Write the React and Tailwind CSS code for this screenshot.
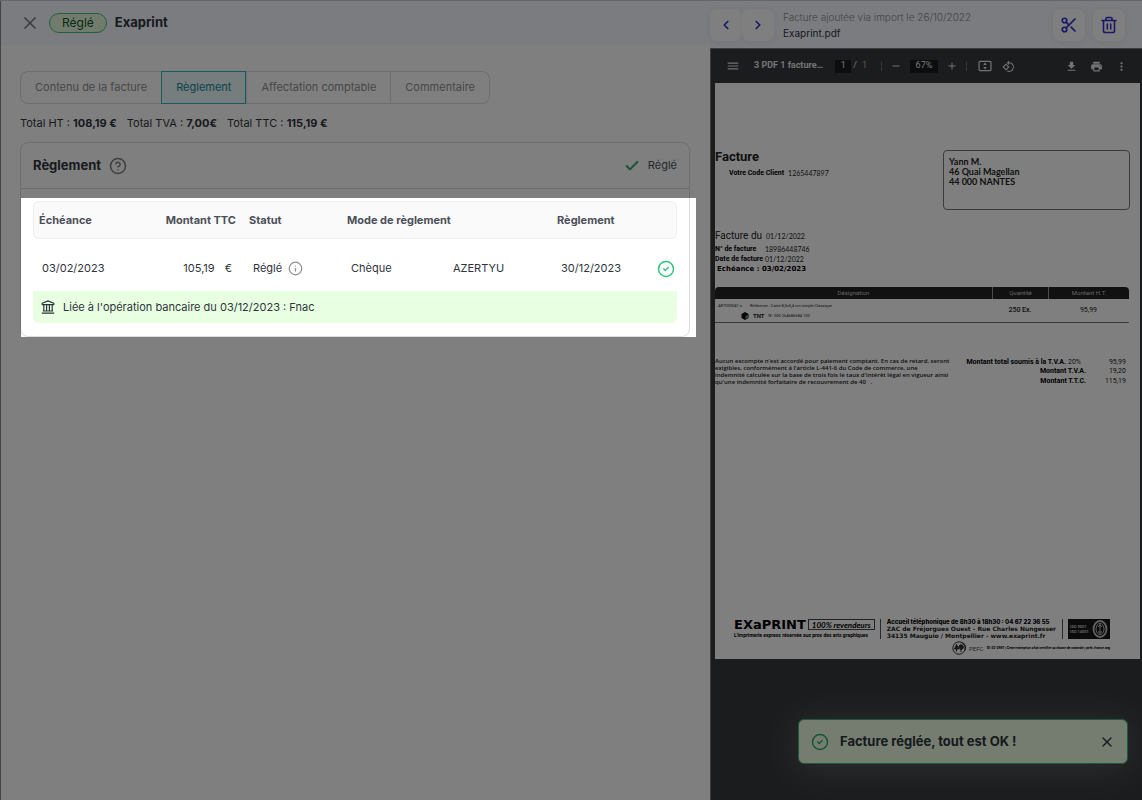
import { Check, ChevronLeft, ChevronRight, CircleCheck, CircleHelp, Info, Scissors, X } from 'lucide-react'
import { MdAdd, MdFileDownload, MdMenu, MdMoreVert, MdPrint, MdRemove, MdRotate90DegreesCcw } from 'react-icons/md'

const TABS = ['Contenu de la facture', 'Règlement', 'Affectation comptable', 'Commentaire']

const TOTALS = [
  { label: 'Total HT', value: '108,19 €' },
  { label: 'Total TVA', value: '7,00€' },
  { label: 'Total TTC', value: '115,19 €' },
]

function TrashIcon() {
  return (
    <svg viewBox="0 0 18 18" className="size-[18px]" fill="none" stroke="currentColor" strokeWidth="1.6" strokeLinecap="round" strokeLinejoin="round">
      <path d="M2 4.5h14M6 4.5V2.6Q6 1.5 7 1.5h4q1 0 1 1.1v1.9M3.5 4.5v10.2q0 1.8 1.8 1.8h7.4q1.8 0 1.8-1.8V4.5M7.3 8v5M10.7 8v5" />
    </svg>
  )
}

function BankIcon() {
  return (
    <svg viewBox="0 0 14 14" className="size-[14px] shrink-0" fill="none" stroke="currentColor" strokeWidth="1.2" strokeLinejoin="round">
      <path d="M1.2 4.6V3.2L7 .9l5.8 2.3v1.4zM2.8 4.6V11M5.6 4.6V11M8.4 4.6V11M11.2 4.6V11M1.9 11h10.2M.8 13.2h12.4" />
    </svg>
  )
}

function FitIcon() {
  return (
    <svg viewBox="0 0 14 12" className="h-3 w-[14px]" fill="none" stroke="currentColor" strokeWidth="1.2">
      <rect x="1" y="1.4" width="12" height="9.2" rx="1" />
      <path d="M7 3v1.8M7 7.2V9" />
      <path d="M5.2 4.9 7 2.9l1.8 2zM5.2 7.1 7 9.1l1.8-2z" fill="currentColor" stroke="none" />
    </svg>
  )
}

function InvoiceHeader() {
  return (
    <header className="flex h-11 items-center bg-[#f6f8ff] pl-[19px]">
      <button type="button" aria-label="Fermer" className="text-[#777777]">
        <X className="size-5" strokeWidth={2} />
      </button>
      <span className="ml-[9px] flex h-5 items-center rounded-full border border-[#3fc17c] bg-[#e2f8d9] px-3 text-xs text-[#14532d]">
        Réglé
      </span>
      <h1 className="ml-2 text-[13px] font-bold text-[#2f343c]">Exaprint</h1>
    </header>
  )
}

function PaymentTable() {
  return (
    <table className="w-full table-fixed border-separate border-spacing-0 text-left text-[11px]">
      <colgroup>
        <col className="w-[111px]" />
        <col className="w-[100px]" />
        <col className="w-[98px]" />
        <col className="w-[102px]" />
        <col className="w-[108px]" />
        <col />
        <col className="w-6" />
      </colgroup>
      <thead>
        <tr className="h-[38px] text-[#4b5058] [&>th]:border-y [&>th]:border-[#eeeeee] [&>th]:bg-[#fafafa] [&>th]:font-bold">
          <th className="rounded-l-md border-l pl-[5px]">Échéance</th>
          <th className="pr-2 text-right whitespace-nowrap">Montant TTC</th>
          <th className="pl-[5px]">Statut</th>
          <th className="pl-[5px]" colSpan={2}>Mode de règlement</th>
          <th className="rounded-r-md border-r pl-[5px]" colSpan={2}>Règlement</th>
        </tr>
      </thead>
      <tbody className="text-[#2f343c]">
        <tr className="h-[52px] [&>td]:pt-[7px]">
          <td className="pl-[9px]">03/02/2023</td>
          <td className="pr-3">
            <span className="flex justify-end gap-[10px]">
              <span>105,19</span>
              <span>€</span>
            </span>
          </td>
          <td className="pl-[9px]">
            <span className="flex items-center gap-[6px]">
              Réglé
              <Info className="size-[15px] text-[#8c8f94]" strokeWidth={2} />
            </span>
          </td>
          <td className="pl-[9px]">Chèque</td>
          <td className="pl-[9px]">AZERTYU</td>
          <td className="pl-[9px]">30/12/2023</td>
          <td>
            <CircleCheck className="ml-1 size-[18px] text-[#34c27b]" strokeWidth={2} />
          </td>
        </tr>
        <tr>
          <td colSpan={7} className="h-8 rounded-b-md bg-[#e8ffe2] px-2">
            <span className="flex items-center gap-2">
              <BankIcon />
              Liée à l'opération bancaire du 03/12/2023 : Fnac
            </span>
          </td>
        </tr>
      </tbody>
    </table>
  )
}

function PaymentPanel() {
  return (
    <main className="pt-[26px] pr-5 pl-[19px]">
      <nav className="flex w-fit text-[11px]">
        {TABS.map((tab) => (
          <button
            key={tab}
            type="button"
            className={
              tab === 'Règlement'
                ? 'h-[33px] border border-[#35b5c2] bg-[#eafafc] px-[14px] text-[#148a96]'
                : 'h-[33px] border border-[#dcdcdc] px-[14px] text-[#8f8f8f] first:rounded-l-lg first:border-r-0 last:rounded-r-lg last:border-l-0'
            }
          >
            {tab}
          </button>
        ))}
      </nav>

      <div className="mt-[9px] flex gap-[10px] text-[11px] leading-5 text-[#2f343c]">
        {TOTALS.map((t) => (
          <p key={t.label}>
            {t.label} : <strong>{t.value}</strong>
          </p>
        ))}
      </div>

      <section className="mt-[9px] rounded-lg border border-[#dddddd]">
        <div className="flex h-[46px] items-center border-b border-[#dddddd] px-3">
          <h2 className="text-[13px] font-bold text-[#2f343c]">Règlement</h2>
          <CircleHelp className="ml-2 size-[18px] text-[#7d7d7d]" strokeWidth={2} />
          <span className="ml-auto flex items-center gap-2 text-[11px] text-[#4b5058]">
            <Check className="size-4 text-[#2fa865]" strokeWidth={3} />
            Réglé
          </span>
        </div>
        <div className="relative px-3 pt-3 pb-[13px]">
          <PaymentTable />
          {/* spotlight: its shadow dims everything else on the page */}
          <div className="pointer-events-none absolute top-[9px] -right-[7px] -bottom-px left-0 z-40 shadow-[0_0_0_3000px_rgba(0,0,0,0.5)]" />
        </div>
      </section>
    </main>
  )
}

function FileHeader() {
  const button = 'flex size-8 items-center justify-center rounded-lg bg-white text-[#3232c8] shadow-[0_1px_6px_rgba(60,70,120,0.08)]'
  return (
    <div className="flex h-[47px] items-center bg-[#f6f8ff] pr-[17px]">
      <button type="button" aria-label="Précédent" className={button}>
        <ChevronLeft className="size-[14px]" strokeWidth={3} />
      </button>
      <button type="button" aria-label="Suivant" className={button}>
        <ChevronRight className="size-[14px]" strokeWidth={3} />
      </button>
      <div className="ml-[9px] text-[10px] leading-4">
        <p className="font-light text-[#8a8a8a]">Facture ajoutée via import le 26/10/2022</p>
        <p className="text-[#2f343c]">Exaprint.pdf</p>
      </div>
      <div className="ml-auto flex gap-2">
        <button type="button" aria-label="Découper" className={button}>
          <Scissors className="size-[18px]" strokeWidth={2.3} />
        </button>
        <button type="button" aria-label="Supprimer" className={button}>
          <TrashIcon />
        </button>
      </div>
    </div>
  )
}

function PdfToolbar() {
  return (
    <div className="flex h-[34px] items-center pr-[14px] pl-[15px] font-[Roboto,sans-serif] text-[9px] text-[#e6e6e6]">
      <button type="button" aria-label="Menu"><MdMenu className="size-[14px]" /></button>
      <span className="ml-[14px] font-bold">3 PDF 1 facture…</span>
      <input aria-label="Page" defaultValue="1" className="ml-3 h-[13px] w-4 bg-[#191b1c] text-center" />
      <span className="ml-[2px] flex gap-[5px]"><span>/</span><span className="text-[#dd9a9a]">1</span></span>
      <span className="ml-[14px] h-[10px] w-px bg-[#666666]" />
      <button type="button" aria-label="Zoom arrière" className="ml-2"><MdRemove className="size-3" /></button>
      <input aria-label="Zoom" defaultValue="67%" className="ml-2 h-[13px] w-7 bg-[#191b1c] text-center" />
      <button type="button" aria-label="Zoom avant" className="ml-2"><MdAdd className="size-3" /></button>
      <span className="ml-2 h-[10px] w-px bg-[#666666]" />
      <button type="button" aria-label="Ajuster" className="ml-[11px]"><FitIcon /></button>
      <button type="button" aria-label="Pivoter" className="ml-[10px]"><MdRotate90DegreesCcw className="size-[13px]" /></button>
      <span className="ml-auto flex gap-3">
        <button type="button" aria-label="Télécharger"><MdFileDownload className="size-[13px]" /></button>
        <button type="button" aria-label="Imprimer"><MdPrint className="size-[13px]" /></button>
        <button type="button" aria-label="Plus"><MdMoreVert className="size-[13px]" /></button>
      </span>
    </div>
  )
}

function InvoiceFooter() {
  return (
    <footer className="mt-auto pr-[30px] pb-1 pl-[19px] text-black">
      <div className="flex items-center justify-between">
        <div>
          <div className="flex items-center gap-[2px]">
            <span className="font-['DejaVu_Sans',sans-serif] text-[13px] leading-3 font-bold">EXaPRINT</span>
            <span className="flex h-[11px] items-center border border-[#444444] px-[3px] font-['Lato',sans-serif] text-[8px] font-bold whitespace-nowrap italic">
              100% revendeurs
            </span>
          </div>
          <p className="mt-px text-[5px] leading-[7px] font-bold whitespace-nowrap">
            L'imprimerie express réservée aux pros des arts graphiques
          </p>
        </div>
        <span className="h-5 w-px bg-[#555555]" />
        <div className="font-['DejaVu_Sans',sans-serif] text-[6px] leading-[7px] font-bold whitespace-nowrap">
          <p className="font-[Inter,sans-serif] font-extrabold">Accueil téléphonique de 8h30 à 18h30 : 04 67 22 36 55</p>
          <p className="text-[#222222]">ZAC de Fréjorgues Ouest - Rue Charles Nungesser</p>
          <p className="text-[#222222]">34135 Mauguio / Montpellier - www.exaprint.fr</p>
        </div>
        <span className="h-5 w-px bg-[#555555]" />
        <div className="flex h-5 w-[42px] items-center justify-between bg-[#161616] px-[2px] text-[#c4c4c4]">
          <p className="text-[4px] leading-[5px] font-bold">ISO 9001<br />ISO 14001</p>
          <svg viewBox="0 0 16 18" className="h-[18px] w-4" fill="none" stroke="currentColor">
            <ellipse cx="8" cy="9" rx="6.5" ry="8" strokeWidth="1.8" />
            <ellipse cx="8" cy="9" rx="4" ry="5.5" />
            <path d="M8 4v10M6 7l2-2 2 2M6 12h4" />
          </svg>
        </div>
      </div>
      <div className="mt-[2px] flex items-center justify-end gap-[3px] whitespace-nowrap">
        <svg viewBox="0 0 14 14" className="size-[14px]" fill="none" stroke="#333333">
          <path d="M10 1.6A6.2 6.2 0 1 0 12.9 9" />
          <path d="M10 1.6a6 6 0 0 1 2.9 7.4" strokeWidth="1.6" />
          <path d="M4.5 3.5 2.5 8h4zM9 3.8a2.3 2.3 0 1 0 .1 0zM4.5 8v2.500M9 8v3" fill="#333333" />
        </svg>
        <span className="text-[6px] text-[#444444]">PEFC</span>
        <span className="font-[Inter,sans-serif] text-[3px] font-extrabold">
          10-32-2887 / Cette entreprise a fait certifier sa chaîne de contrôle / pefc-france.org
        </span>
      </div>
    </footer>
  )
}

function InvoicePage() {
  return (
    <article className="mr-[2px] ml-1 flex h-[576px] flex-col bg-white font-[Roboto,sans-serif] text-[7px] text-[#222222]">
      <div className="flex justify-between pt-[67px] pr-[10px]">
        <div>
          <h3 className="text-[13px] leading-[14px] font-bold">Facture</h3>
          <p className="mt-1 flex gap-1 pl-[14px] leading-[10px]">
            <b className="text-black">Votre Code Client</b>
            <span className="font-[Lato,sans-serif]">1265447897</span>
          </p>
        </div>
        <address className="h-[60px] w-[187px] rounded border border-[#777777] px-[5px] pt-[6px] font-[Lato,sans-serif] text-[9px] leading-[10px] font-bold not-italic">
          Yann M.<br />46 Quai Magellan<br />44 000 NANTES
        </address>
      </div>

      <div className="mt-[19px] leading-[10px]">
        <p className="mb-px flex h-[14px] items-center gap-1">
          <span className="text-[10px]">Facture du</span>
          <span className="font-[Lato,sans-serif]">01/12/2022</span>
        </p>
        <dl className="grid grid-cols-[50px_1fr]">
          <dt className="font-bold text-black">N° de facture</dt>
          <dd className="font-[Lato,sans-serif]">18986448746</dd>
          <dt className="font-bold whitespace-nowrap text-black">Date de facture</dt>
          <dd className="font-[Lato,sans-serif]">01/12/2022</dd>
        </dl>
        <p className="pl-[2px] font-['DejaVu_Sans',sans-serif] font-bold text-black">Echéance : 03/02/2023</p>
      </div>

      <div className="mt-[13px] pr-[11px]">
        <table className="w-full table-fixed border-separate border-spacing-0 text-center">
          <thead className="text-[6px] leading-3 text-[#c8c8c8]">
            <tr className="[&>th]:bg-[#222222] [&>th]:font-normal">
              <th className="rounded-tl">Désignation</th>
              <th className="w-14 border-l border-[#999999]">Quantité</th>
              <th className="w-[81px] rounded-tr border-l border-[#999999]">Montant H.T.</th>
            </tr>
          </thead>
          <tbody>
            <tr className="h-6 [&>td]:border-b [&>td]:border-[#777777]">
              <td className="pl-[3px] text-left text-[4px] leading-[10px]">
                <p className="flex gap-2"><span>ART000041 =</span><span>Référence : Carte 8,5x5,4 cm simple Classique</span></p>
                <p className="flex items-center gap-1 pl-[23px]">
                  <svg viewBox="0 0 8 8" className="size-2">
                    <path d="M4 0 7.5 2v4L4 8 .5 6V2z" fill="#111111" />
                    <path d="M4.6 4.2 7 2.9v2.7L4.6 7z" fill="#888888" />
                  </svg>
                  <b className="text-[6px]">TNT</b>
                  <span>N° 000 264686684 130</span>
                </p>
              </td>
              <td className="font-medium">250 Ex.</td>
              <td>95,99</td>
            </tr>
          </tbody>
        </table>
      </div>

      <div className="mt-[35px] flex justify-between pr-[14px]">
        <p className="font-['Open_Sans',sans-serif] text-[6px] leading-[7px] font-semibold whitespace-nowrap">
          Aucun escompte n'est accordé pour paiement comptant. En cas de retard, seront<br />
          exigibles, conformément à l'article L-441-6 du Code de commerce, une<br />
          indemnité calculée sur la base de trois fois le taux d'intérêt légal en vigueur ainsi<br />
          qu'une indemnité forfaitaire de recouvrement de 40 &nbsp; .
        </p>
        <table className="text-right leading-[9px]">
          <tbody>
            <tr>
              <th className="pr-[2px] text-black">Montant total soumis à la T.V.A.</th>
              <td className="w-[18px] text-left">20%</td>
              <td className="w-10">95,99</td>
            </tr>
            <tr>
              <th colSpan={2} className="text-black">Montant T.V.A.</th>
              <td>19,20</td>
            </tr>
            <tr>
              <th colSpan={2} className="text-black">Montant T.T.C.</th>
              <td>115,19</td>
            </tr>
          </tbody>
        </table>
      </div>

      <InvoiceFooter />
    </article>
  )
}

function Toast() {
  return (
    <div role="status" className="absolute right-[14px] bottom-9 flex h-[45px] w-[330px] items-center rounded-md border border-[#3fae74] bg-[#e9fbe1] px-3 text-[#2f343c] shadow-[0_4px_36px_rgba(255,255,255,0.2)]">
      <CircleCheck className="size-[18px] text-[#2fa865]" strokeWidth={2} />
      <p className="ml-[11px] text-[13px] font-bold">Facture réglée, tout est OK !</p>
      <button type="button" aria-label="Fermer" className="ml-auto">
        <X className="size-4" strokeWidth={2} />
      </button>
    </div>
  )
}

export default function App() {
  return (
    <div className="relative overflow-hidden bg-white font-[Inter,sans-serif]">
      <div className="flex min-h-screen border-t border-[#cfcfd4]">
        <div className="min-w-0 flex-1 border-l border-[#888888]">
          <InvoiceHeader />
          <PaymentPanel />
        </div>
        <aside className="flex w-[432px] shrink-0 flex-col">
          <FileHeader />
          <div className="flex-1 border-t border-l border-[#77797d] bg-[#36393c]">
            <PdfToolbar />
            <InvoicePage />
          </div>
        </aside>
      </div>
      <Toast />
    </div>
  )
}
